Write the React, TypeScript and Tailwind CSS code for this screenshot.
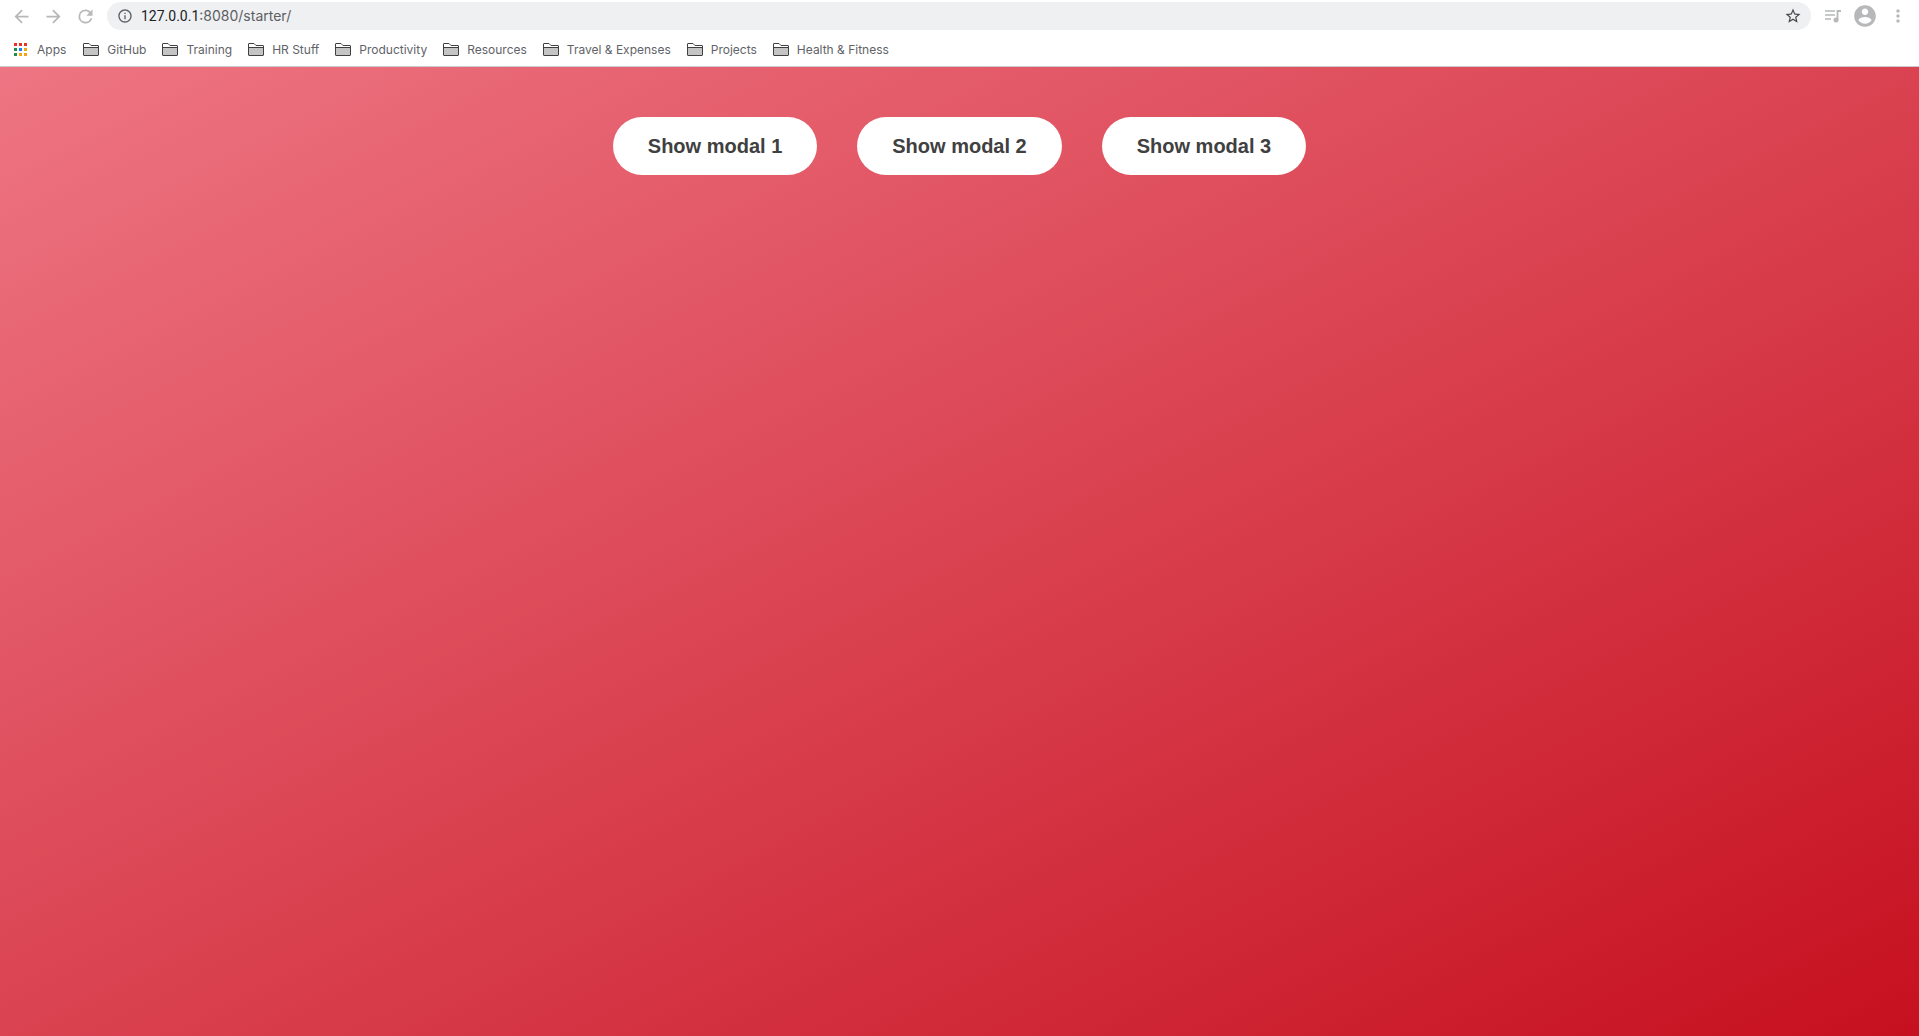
const bookmarks = [
  'GitHub',
  'Training',
  'HR Stuff',
  'Productivity',
  'Resources',
  'Travel & Expenses',
  'Projects',
  'Health & Fitness',
];

const modals = ['Show modal 1', 'Show modal 2', 'Show modal 3'];

const dotColors = [
  '#ea3324', '#ea3324', '#ea3324',
  '#1e8e4e', '#1a82f7', '#f2a60d',
  '#1e8e4e', '#f2a60d', '#f2a60d',
];

function MaterialIcon({ d, className }: { d: string; className: string }) {
  return (
    <svg viewBox="0 0 24 24" fill="currentColor" aria-hidden="true" className={className}>
      <path d={d} />
    </svg>
  );
}

function AppsIcon() {
  return (
    <svg viewBox="0 0 13 13" aria-hidden="true" className="size-[13px]" shapeRendering="crispEdges">
      {dotColors.map((color, i) => (
        <rect key={i} x={(i % 3) * 5} y={Math.floor(i / 3) * 5} width="3" height="3" fill={color} />
      ))}
    </svg>
  );
}

function FolderIcon() {
  return (
    <svg viewBox="0 0 16 13" aria-hidden="true" className="h-[13px] w-4">
      <path d="M.5 12V1Q.5.5 1 .5H6L8 2.5H15Q15.5 2.5 15.5 3V12Q15.5 12.5 15 12.5H1Q.5 12.5.5 12Z" fill="#fff" stroke="#3f4042" />
      <path d="M1 5H15V12H1Z" fill="#c4c4c4" />
      <path d="M1 4.5H15" stroke="#3f4042" />
    </svg>
  );
}

function Toolbar() {
  return (
    <div className="flex h-8 items-center px-[11px] text-[#b7b8ba]">
      <div className="flex items-center gap-3">
        <button aria-label="Back" className="flex size-5 items-center justify-center">
          <MaterialIcon className="size-[21px] shrink-0" d="M20 11H7.83l5.59-5.59L12 4l-8 8 8 8 1.41-1.41L7.83 13H20v-2z" />
        </button>
        <button aria-label="Forward" className="flex size-5 items-center justify-center">
          <MaterialIcon className="size-[21px] shrink-0" d="M12 4l-1.41 1.41L16.17 11H4v2h12.17l-5.58 5.59L12 20l8-8z" />
        </button>
        <button aria-label="Reload" className="flex size-5 items-center justify-center">
          <MaterialIcon className="size-[21px] shrink-0" d="M17.65 6.35A7.958 7.958 0 0 0 12 4a8 8 0 1 0 7.73 10h-2.08A6 6 0 1 1 12 6c1.66 0 3.14.69 4.22 1.78L13 11h7V4l-2.35 2.35z" />
        </button>
      </div>
      <div className="ml-3 flex h-7 flex-1 items-center rounded-full bg-[#eff0f2] pr-[9px] pl-2.5 text-[#5c5f63]">
        <MaterialIcon className="size-4 shrink-0" d="M11 7h2v2h-2zm0 4h2v6h-2zm1-9C6.48 2 2 6.48 2 12s4.48 10 10 10 10-4.48 10-10S17.52 2 12 2zm0 18c-4.41 0-8-3.59-8-8s3.59-8 8-8 8 3.59 8 8-3.59 8-8 8z" />
        <div className="ml-2 flex-1 font-[Inter,sans-serif] text-sm">
          <span className="font-[Roboto,sans-serif] text-[#202124]">127.0.0.1</span>:8080/starter/
        </div>
        <button aria-label="Bookmark this page" className="text-[#46484b]">
          <MaterialIcon className="size-[18px]" d="M22 9.24l-7.19-.62L12 2 9.19 8.63 2 9.24l5.46 4.73L5.82 21 12 17.27 18.18 21l-1.63-7.03L22 9.24zM12 15.4l-3.76 2.27 1-4.28-3.32-2.88 4.38-.38L12 6.1l1.71 4.04 4.38.38-3.32 2.88 1 4.28L12 15.4z" />
        </button>
      </div>
      <div className="ml-[13px] flex items-center">
        <button aria-label="Media controls">
          <svg viewBox="0 0 18 14" fill="none" stroke="currentColor" aria-hidden="true" className="h-3.5 w-[18px]">
            <path d="M1 2H11M1 6H11M1 10H7" strokeWidth="1.5" />
            <path d="M13.5 11V2H17" strokeWidth="1.8" />
            <circle cx="12" cy="11" r="2.5" fill="currentColor" stroke="none" />
          </svg>
        </button>
        <button aria-label="Profile" className="ml-2.5">
          <MaterialIcon className="size-[26px]" d="M12 2C6.48 2 2 6.48 2 12s4.48 10 10 10 10-4.48 10-10S17.52 2 12 2zm0 3c1.66 0 3 1.34 3 3s-1.34 3-3 3-3-1.34-3-3 1.34-3 3-3zm0 14.2a7.2 7.2 0 0 1-6-3.22c.03-1.99 4-3.08 6-3.08 1.99 0 5.97 1.09 6 3.08a7.2 7.2 0 0 1-6 3.22z" />
        </button>
        <button aria-label="Menu" className="ml-2.5">
          <MaterialIcon className="size-5" d="M12 8c1.1 0 2-.9 2-2s-.9-2-2-2-2 .9-2 2 .9 2 2 2zm0 2c-1.1 0-2 .9-2 2s.9 2 2 2 2-.9 2-2-.9-2-2-2zm0 6c-1.1 0-2 .9-2 2s.9 2 2 2 2-.9 2-2-.9-2-2-2z" />
        </button>
      </div>
    </div>
  );
}

function BookmarksBar() {
  return (
    <nav aria-label="Bookmarks" className="flex h-[35px] items-center gap-[17px] border-b border-[#c9cbcd] pt-px pl-3.5 font-[Inter,sans-serif] text-xs text-[#5f6368]">
      <button className="flex items-center gap-2.5">
        <AppsIcon />
        Apps
      </button>
      <div className="flex items-center gap-4">
        {bookmarks.map((name) => (
          <button key={name} className="flex items-center gap-2">
            <FolderIcon />
            {name}
          </button>
        ))}
      </div>
    </nav>
  );
}

export default function App() {
  return (
    <div className="flex min-h-screen flex-col bg-white">
      <header>
        <Toolbar />
        <BookmarksBar />
      </header>
      <main className="flex flex-1 items-start justify-center gap-10 bg-linear-to-br/srgb from-[#ee7583] to-[#c6101f] pt-[50px]">
        {modals.map((label) => (
          <button
            key={label}
            className="rounded-full bg-white px-[35px] py-[17px] font-['Liberation_Sans',Arial,sans-serif] text-xl leading-6 font-bold text-[#404040]"
          >
            {label}
          </button>
        ))}
      </main>
    </div>
  );
}
